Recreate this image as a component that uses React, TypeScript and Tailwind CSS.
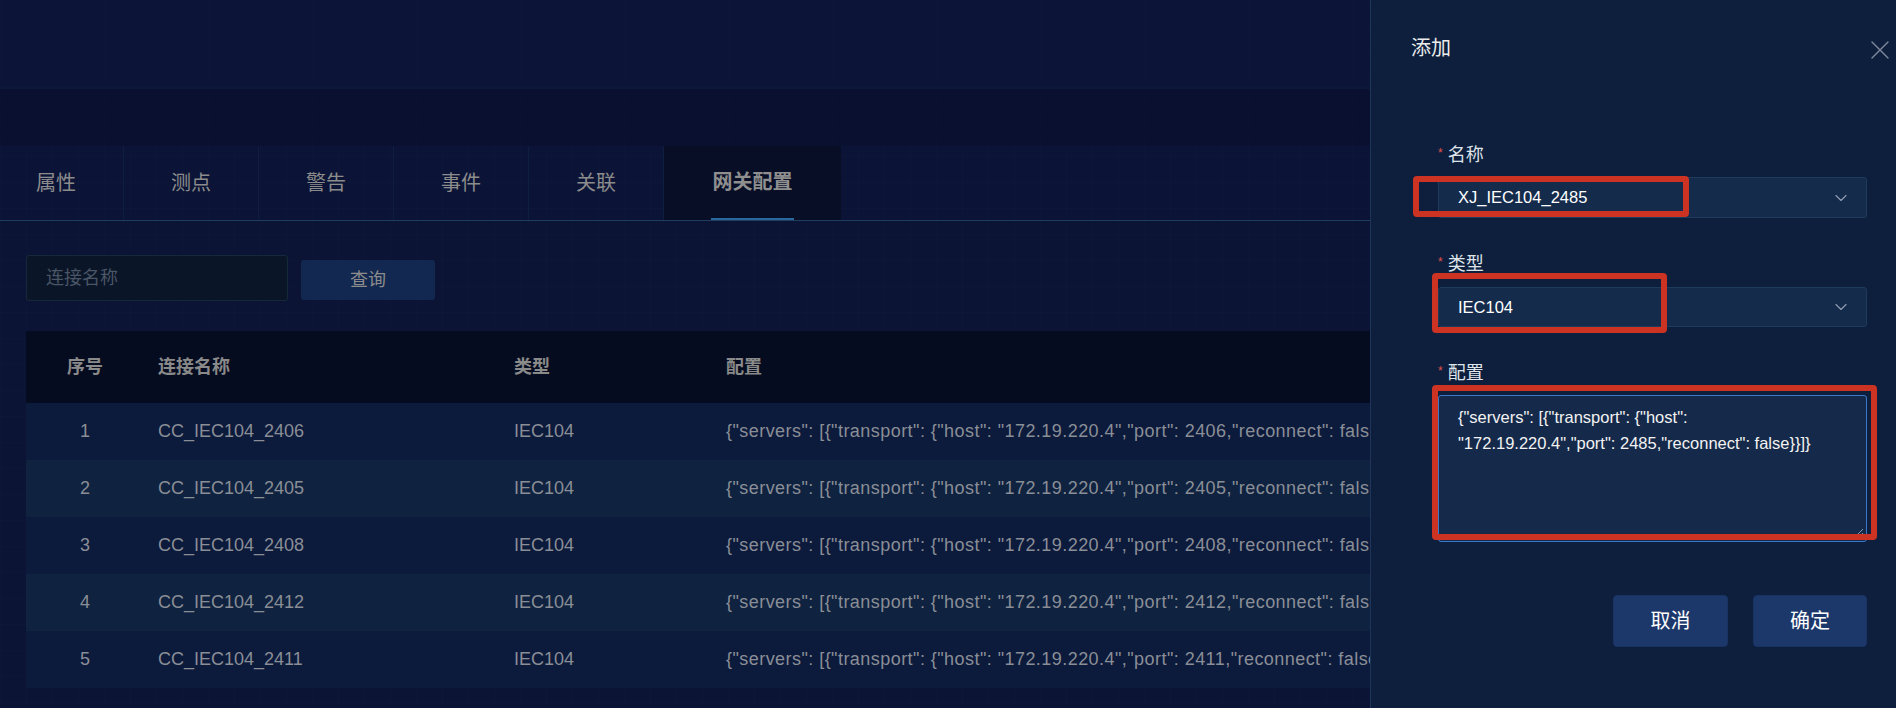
import React from "react";
import { ChevronDown, X } from "lucide-react";

const rows = [
  { n: 1, name: "CC_IEC104_2406", port: 2406 },
  { n: 2, name: "CC_IEC104_2405", port: 2405 },
  { n: 3, name: "CC_IEC104_2408", port: 2408 },
  { n: 4, name: "CC_IEC104_2412", port: 2412 },
  { n: 5, name: "CC_IEC104_2411", port: 2411 },
];

const tabs = ["属性", "测点", "警告", "事件", "关联"];

function Label({ text }: { text: string }) {
  return (
    <div className="flex items-start h-[24px] leading-[24px]">
      <span className="text-[#e0524a] text-[12px] leading-[18px] mr-[5px] mt-[1px]">*</span>
      <span className="text-[18px] text-[#dfe3ea]">{text}</span>
    </div>
  );
}

function Select({ value, h }: { value: string; h: string }) {
  return (
    <div className={`flex items-center justify-between ${h} bg-[#152b4b] border border-[#1f3b5c] rounded-[3px] pl-[19px] pr-[15px]`}>
      <span className="text-[16.5px] text-white">{value}</span>
      <ChevronDown size={20} strokeWidth={1.4} className="text-[#8d9bb0]" />
    </div>
  );
}

export default function App() {
  return (
    <div className="relative w-[1896px] h-[708px] overflow-hidden bg-[#0a1332] font-['Liberation_Sans','Noto_Sans_CJK_SC',sans-serif]">
      {/* main */}
      <div className="flex flex-col h-full bg-[image:linear-gradient(rgba(40,70,120,0.10)_1px,transparent_1px),linear-gradient(90deg,rgba(40,70,120,0.10)_1px,transparent_1px)] bg-[size:26px_26px]">
        <div className="h-[89px] bg-[#0c1738]/80 border-b-2 border-[#0c1839]" />
        <div className="h-[57px] bg-[#0a1230]/80" />
        {/* tabs */}
        <div className="h-[75px] flex border-b border-[#1f3d5e] bg-[#0b1637]/70">
          <div className="flex -ml-[11px] h-full">
            {tabs.map((t) => (
              <div
                key={t}
                className="w-[135px] h-full flex items-center justify-center border-r border-[#0f1d3e] text-[20px] text-[#8c8c8c]"
              >
                {t}
              </div>
            ))}
            <div className="w-[177px] h-full flex flex-col items-center bg-[#070e26]">
              <div className="flex-1 flex items-center text-[20px] font-bold text-[#8f8f8f]">网关配置</div>
              <div className="h-[2px] w-[83px] bg-[#2a679c]" />
            </div>
          </div>
        </div>
        {/* content */}
        <div className="flex-1 px-[26px] pt-[34px] bg-[#0b1537]/60">
          <div className="flex items-start">
            <div className="w-[262px] h-[46px] bg-[#0a1628] border border-[#15293a] rounded-[3px] flex items-center pl-[19px] text-[18px] text-[#4a5566]">
              连接名称
            </div>
            <div className="ml-[13px] mt-[5px] w-[134px] h-[40px] bg-[#132850] rounded-[3px] flex items-center justify-center text-[18px] text-[#8c8c8c]">
              查询
            </div>
          </div>
          <div className="mt-[30px] w-[1700px]">
            <div className="flex items-center h-[72px] bg-[#050c1f] text-[18px] font-bold text-[#8a8a8a]">
              <div className="w-[118px] text-center">序号</div>
              <div className="w-[356px] pl-[14px]">连接名称</div>
              <div className="w-[212px] pl-[14px]">类型</div>
              <div className="flex-1 pl-[14px]">配置</div>
            </div>
            {rows.map((r, i) => (
              <div
                key={r.n}
                className={`flex items-center h-[57px] text-[18px] text-[#8a8e96] ${i % 2 === 0 ? "bg-[#0c1a3c]" : "bg-[#0f2240]"}`}
              >
                <div className="w-[118px] text-center">{r.n}</div>
                <div className="w-[356px] pl-[14px]">{r.name}</div>
                <div className="w-[212px] pl-[14px]">IEC104</div>
                <div className="flex-1 pl-[14px] whitespace-nowrap tracking-[0.45px]">
                  {`{"servers": [{"transport": {"host": "172.19.220.4","port": ${r.port},"reconnect": false}}]}`}
                </div>
              </div>
            ))}
          </div>
        </div>
      </div>

      {/* drawer */}
      <div className="absolute top-0 right-0 w-[526px] h-full bg-[#0d1f3d] border-l border-[#1e3458] flex flex-col">
        <div className="h-[96px] flex items-center justify-between pl-[40px] pr-0">
          <span className="text-[20px] text-[#ececec]">添加</span>
          <X size={32} strokeWidth={1} className="text-[#7c8799] mt-[3px]" />
        </div>
        <div className="pl-[67px] pr-[29px] flex flex-col">
          <div className="mt-[47px]">
            <Label text="名称" />
          </div>
          <div className="mt-[10px]">
            <Select value="XJ_IEC104_2485" h="h-[41px]" />
          </div>
          <div className="mt-[34px]">
            <Label text="类型" />
          </div>
          <div className="mt-[11px]">
            <Select value="IEC104" h="h-[40px]" />
          </div>
          <div className="mt-[34px]">
            <Label text="配置" />
          </div>
          <div className="mt-[10px] relative h-[147px] bg-[#152a4a] border border-[#3b78c8] rounded-[3px] px-[19px] pt-[8px] text-[16.5px] leading-[26px] text-[#f2f2f2] whitespace-pre">
            <div>{'{"servers": [{"transport": {"host":'}</div>
            <div>{'"172.19.220.4","port": 2485,"reconnect": false}}]}'}</div>
            <svg className="absolute right-[2px] bottom-[2px]" width="12" height="12" viewBox="0 0 12 12">
              <line x1="2" y1="11" x2="11" y2="2" stroke="#8899aa" strokeWidth="1" />
              <line x1="6" y1="11" x2="11" y2="6" stroke="#8899aa" strokeWidth="1" />
            </svg>
          </div>
          <div className="mt-[53px] flex justify-end gap-[25px]">
            <div className="w-[115px] h-[52px] bg-[#1c386b] border border-[#1a3262] rounded-[4px] flex items-center justify-center text-[20px] text-white">
              取消
            </div>
            <div className="w-[114px] h-[52px] bg-[#1c386b] border border-[#1a3262] rounded-[4px] flex items-center justify-center text-[20px] text-white">
              确定
            </div>
          </div>
        </div>
      </div>

      {/* red annotation boxes */}
      <div className="absolute left-[1413px] top-[176px] w-[276px] h-[41px] border-[6px] border-[#cc3322] rounded-[4px]" />
      <div className="absolute left-[1432px] top-[273px] w-[235px] h-[60px] border-[6px] border-[#cc3322] rounded-[4px]" />
      <div className="absolute left-[1432px] top-[385px] w-[445px] h-[155px] border-[6px] border-[#cc3322] rounded-[4px]" />
    </div>
  );
}
